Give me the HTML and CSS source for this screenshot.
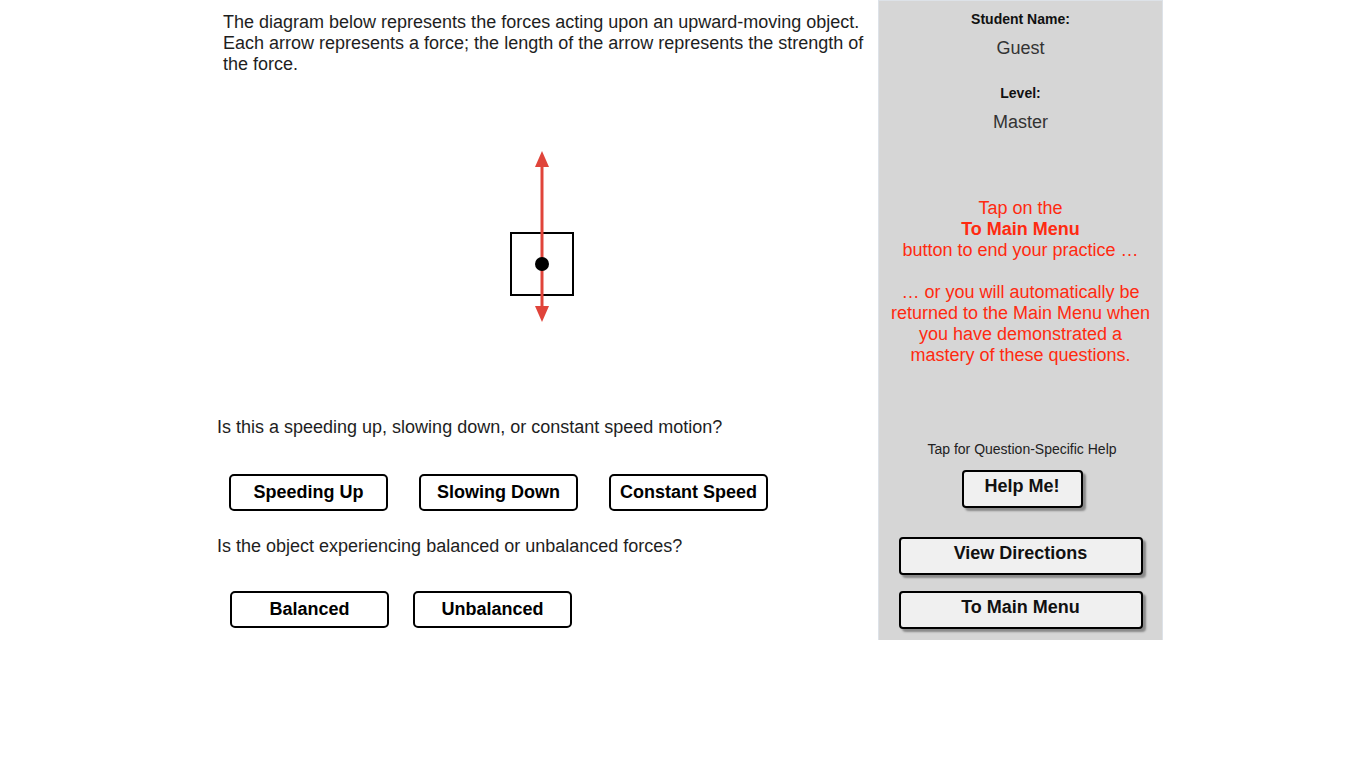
FILE: index.html
```html
<!DOCTYPE html>
<html lang="en">
<head>
<meta charset="utf-8">
<title>Forces Practice</title>
<link rel="stylesheet" href="styles.css">
</head>
<body>
<div class="page">
  <main class="main">
    <p class="intro">The diagram below represents the forces acting upon an upward-moving object. Each arrow represents a force; the length of the arrow represents the strength of the force.</p>
    <div class="diagram">
      <svg width="80" height="190" viewBox="0 0 80 190" xmlns="http://www.w3.org/2000/svg">
        <rect x="9" y="93" width="62" height="62" fill="none" stroke="#000" stroke-width="2"/>
        <line x1="40" y1="24" x2="40" y2="168" stroke="#e0443a" stroke-width="3"/>
        <polygon points="40,11 33,27 47,27" fill="#e0443a"/>
        <polygon points="40,182 33,166 47,166" fill="#e0443a"/>
        <circle cx="40" cy="124" r="7" fill="#000"/>
      </svg>
    </div>
    <p class="question">Is this a speeding up, slowing down, or constant speed motion?</p>
    <div class="choices choices-1">
      <button class="choice">Speeding Up</button>
      <button class="choice">Slowing Down</button>
      <button class="choice">Constant Speed</button>
    </div>
    <p class="question q2">Is the object experiencing balanced or unbalanced forces?</p>
    <div class="choices choices-2">
      <button class="choice">Balanced</button>
      <button class="choice">Unbalanced</button>
    </div>
  </main>
  <aside class="sidebar">
    <div class="label">Student Name:</div>
    <div class="value">Guest</div>
    <div class="label level">Level:</div>
    <div class="value">Master</div>
    <div class="notice">
      Tap on the<br>
      <strong>To Main Menu</strong><br>
      button to end your practice …<br>
      <br>
      … or you will automatically be returned to the Main Menu when you have demonstrated a mastery of these questions.
    </div>
    <div class="help-label">Tap for Question-Specific Help</div>
    <button class="side-btn help">Help Me!</button>
    <button class="side-btn wide directions">View Directions</button>
    <button class="side-btn wide menu">To Main Menu</button>
  </aside>
</div>
</body>
</html>
```

FILE: styles.css
```css
html, body {
  margin: 0;
  padding: 0;
  background: #ffffff;
}

body {
  font-family: "Liberation Sans", Arial, sans-serif;
  color: #1e1e1e;
}

.page {
  width: 960px;
  margin: 0 auto;
  display: flex;
  align-items: flex-start;
}

.main {
  width: 675px;
  flex: none;
}

.intro {
  margin: 12px 0 0 20px;
  width: 650px;
  font-size: 18px;
  line-height: 21px;
}

.diagram {
  height: 342px;
  box-sizing: border-box;
  padding: 65px 0 0 3px;
  display: flex;
  justify-content: center;
  align-items: flex-start;
}

.diagram svg {
  display: block;
}

.question {
  margin: 0 0 0 14px;
  font-size: 18px;
  line-height: 21px;
}

.q2 {
  margin-top: 25px;
}

.choices {
  display: flex;
  margin-left: 26px;
}

.choices-1 {
  margin-top: 36px;
  gap: 31px;
}

.choices-2 {
  margin-top: 34px;
  margin-left: 27px;
  gap: 24px;
}

.choice {
  width: 159px;
  height: 37px;
  box-sizing: border-box;
  border: 2px solid #000;
  border-radius: 5px;
  background: #fff;
  font-family: "Liberation Sans", Arial, sans-serif;
  font-weight: bold;
  font-size: 18px;
  color: #000;
  padding: 0;
}

.sidebar {
  width: 285px;
  height: 640px;
  flex: none;
  box-sizing: border-box;
  background: #d6d6d6;
  border-left: 1px solid #dde2e8;
  border-right: 1px solid #dde2e8;
  border-top: 1px solid #dde2e8;
  display: flex;
  flex-direction: column;
  align-items: center;
  padding-top: 10px;
}

.label {
  font-size: 14px;
  font-weight: bold;
  line-height: 16px;
  color: #111;
}

.level {
  margin-top: 26px;
}

.value {
  margin-top: 11px;
  font-size: 18px;
  line-height: 21px;
  color: #333;
}

.notice {
  margin-top: 65px;
  width: 272px;
  text-align: center;
  color: #ff2a10;
  font-size: 18px;
  line-height: 21px;
}

.notice strong {
  font-weight: bold;
}

.help-label {
  margin-top: 75px;
  font-size: 14px;
  line-height: 16px;
  color: #222;
  padding-left: 3px;
}

.side-btn {
  box-sizing: border-box;
  height: 38px;
  border: 2px solid #000;
  border-radius: 4px;
  background: #f0f0f0;
  box-shadow: 3px 3px 2px #8a8a8a;
  font-family: "Liberation Sans", Arial, sans-serif;
  font-weight: bold;
  font-size: 18px;
  color: #111;
  padding: 0 0 5px 0;
}

.help {
  width: 121px;
  margin-top: 13px;
  margin-left: 3px;
}

.wide {
  width: 244px;
}

.directions {
  margin-top: 29px;
}

.menu {
  margin-top: 16px;
}
```
